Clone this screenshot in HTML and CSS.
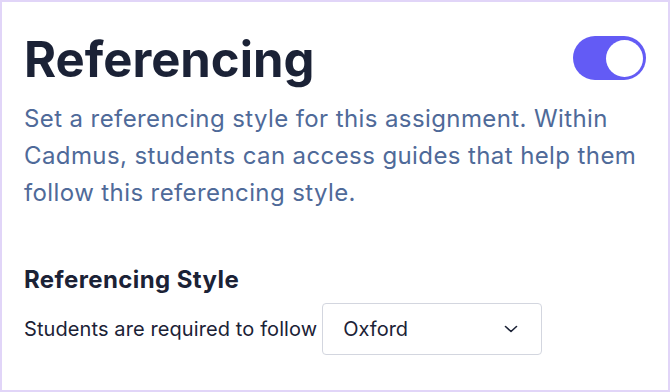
FILE: index.html
```html
<!DOCTYPE html>
<html lang="en">

<head>
  <meta charset="UTF-8">
  <meta name="viewport" content="width=device-width, initial-scale=1.0">
  <title>Referencing</title>
  <link rel="stylesheet" href="styles.css">
</head>

<body>
  <div class="card">
    <div class="card-header">
      <h1>Referencing</h1>
      <span class="toggle on" role="switch" aria-checked="true"><span class="knob"></span></span>
    </div>

    <p class="description">
      Set a referencing style for this assignment. Within Cadmus, students can access guides that help them
      follow this referencing style.
    </p>

    <h2>Referencing Style</h2>
    <div class="style-row">
      <label for="style">Students are required to follow</label>
      <div class="select" id="style">
        <span>Oxford</span>
        <svg width="14" height="8" viewBox="0 0 14 8" fill="none">
          <path d="M1.5 1.5 L7 6.5 L12.5 1.5" stroke="#1b2236" stroke-width="1.6" stroke-linecap="round" stroke-linejoin="round" />
        </svg>
      </div>
    </div>
  </div>
</body>

</html>
```

FILE: styles.css
```css
* {
  box-sizing: border-box;
}

html,
body {
  margin: 0;
  height: 100%;
}

body {
  font-family: Inter, "Noto Sans", sans-serif;
  background: white;
  color: #1b2236;
}

.card {
  height: 100%;
  border: 2px solid #e1d5f8;
  padding: 22px;
}

.card-header {
  display: flex;
  justify-content: space-between;
  align-items: center;
  margin-top: 3px;
}

h1 {
  margin: 4px 0 0;
  font-size: 49px;
  font-weight: 700;
  line-height: 1.2;
  color: #1b2236;
}

.toggle {
  width: 73px;
  height: 44px;
  border-radius: 22px;
  background: #635bf5;
  display: flex;
  align-items: center;
  justify-content: flex-end;
  padding: 0 3px;
}

.knob {
  width: 37px;
  height: 37px;
  border-radius: 50%;
  background: white;
}

.description {
  margin: 10px 0 0;
  font-size: 24px;
  letter-spacing: 0.4px;
  line-height: 37px;
  color: #4f6a99;
}

h2 {
  margin: 54px 0 0;
  font-size: 24px;
  font-weight: 700;
  letter-spacing: 0.4px;
  line-height: 30px;
}

.style-row {
  display: flex;
  align-items: center;
  gap: 5px;
  margin-top: 8px;
}

label {
  font-size: 20px;
  letter-spacing: 0.1px;
  color: #1b2236;
}

.select {
  width: 220px;
  height: 52px;
  border: 1px solid #d3d6df;
  border-radius: 4px;
  display: flex;
  align-items: center;
  justify-content: space-between;
  padding: 0 23px 0 20px;
  font-size: 20px;
}
```
